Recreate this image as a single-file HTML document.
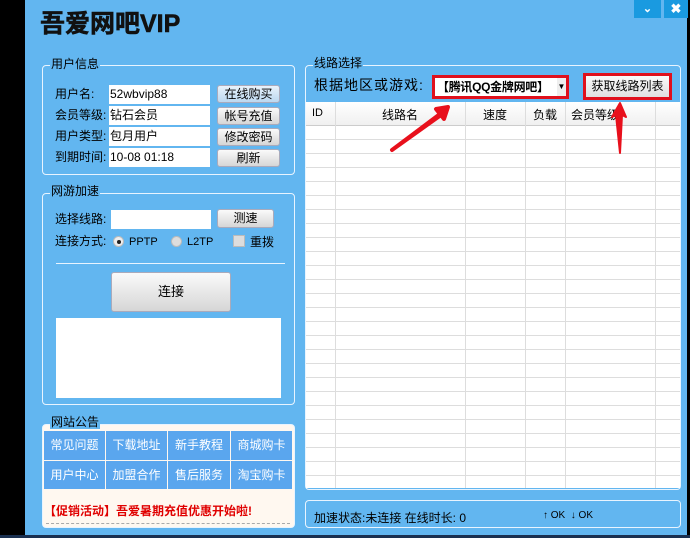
<!DOCTYPE html>
<html><head><meta charset="utf-8"><style>
*{margin:0;padding:0;box-sizing:border-box}
body{width:690px;height:538px;background:#62b6f0;position:relative;overflow:hidden;font-family:"Liberation Sans","Noto Sans CJK SC",sans-serif;font-size:12px;color:#000}
.a{position:absolute}
.grp{position:absolute;border:1px solid #e8f4ff;border-radius:4px}
.lbl{position:absolute;background:#62b6f0;font-size:12px;padding:0 1px;line-height:14px}
.inp{position:absolute;background:#fff;height:19px;line-height:19px;font-size:12px;padding-left:1px}
.btn{position:absolute;background:linear-gradient(#fafafa,#e6e6e6 55%,#d6d6d6);border:1px solid #aab;border-radius:3px;text-align:center;font-size:12px}
.cell{position:absolute;background:#5aa6ee;color:#fff;text-align:center;line-height:29px;font-size:12px}
</style></head><body>
<div class="a" style="left:0;top:0;width:25px;height:538px;background:#000"></div>
<div class="a" style="left:687px;top:0;width:3px;height:538px;background:#000"></div>
<div class="a" style="left:0;top:535px;width:690px;height:3px;background:#1a3050"></div>
<div class="a" style="left:634px;top:0;width:27px;height:18px;background:#1a9ae0;color:#fff;text-align:center;font-size:11px;font-weight:bold;line-height:18px">⌄</div>
<div class="a" style="left:664px;top:0;width:24px;height:18px;background:#1a9ae0;color:#fff;text-align:center;font-size:13px;font-weight:bold;line-height:18px">✖</div>
<div class="a" style="left:40px;top:9px;font-size:25px;font-weight:bold;color:#111;line-height:30px;-webkit-text-stroke:0.6px #111">吾爱网吧VIP</div>

<div class="grp" style="left:42px;top:65px;width:253px;height:110px"></div>
<div class="lbl" style="left:50px;top:57px">用户信息</div>
<div class="a" style="left:55px;top:84px;line-height:21px">用户名:<br>会员等级:<br>用户类型:<br>到期时间:</div>
<div class="inp" style="left:109px;top:85px;width:101px">52wbvip88</div>
<div class="inp" style="left:109px;top:106px;width:101px">钻石会员</div>
<div class="inp" style="left:109px;top:127px;width:101px">包月用户</div>
<div class="inp" style="left:109px;top:148px;width:101px">10-08 01:18</div>
<div class="btn" style="left:217px;top:85px;width:63px;height:18px;line-height:16px;background:linear-gradient(#e8f2fb,#bcd8f0)">在线购买</div>
<div class="btn" style="left:217px;top:107px;width:63px;height:18px;line-height:16px">帐号充值</div>
<div class="btn" style="left:217px;top:128px;width:63px;height:18px;line-height:16px">修改密码</div>
<div class="btn" style="left:217px;top:149px;width:63px;height:18px;line-height:16px">刷新</div>

<div class="grp" style="left:42px;top:193px;width:253px;height:212px"></div>
<div class="lbl" style="left:50px;top:184px">网游加速</div>
<div class="a" style="left:55px;top:210px">选择线路:</div>
<div class="inp" style="left:111px;top:210px;width:100px"></div>
<div class="btn" style="left:217px;top:209px;width:57px;height:19px;line-height:17px">测速</div>
<div class="a" style="left:55px;top:232px">连接方式:</div>
<div class="a" style="left:113px;top:236px;width:11px;height:11px;border-radius:50%;background:#eee;border:1px solid #bbb"></div>
<div class="a" style="left:117px;top:240px;width:4px;height:4px;border-radius:50%;background:#222"></div>
<div class="a" style="left:129px;top:236px;font-size:11px">PPTP</div>
<div class="a" style="left:171px;top:236px;width:11px;height:11px;border-radius:50%;background:#ddd;border:1px solid #bbb"></div>
<div class="a" style="left:187px;top:236px;font-size:11px">L2TP</div>
<div class="a" style="left:233px;top:235px;width:12px;height:12px;background:#ddd;border:1px solid #bbb"></div>
<div class="a" style="left:250px;top:233px">重拨</div>
<div class="a" style="left:56px;top:263px;width:229px;height:1px;background:#e8f4ff"></div>
<div class="btn" style="left:111px;top:272px;width:120px;height:40px;line-height:38px;font-size:13px">连接</div>
<div class="a" style="left:56px;top:318px;width:225px;height:80px;background:#fff"></div>

<div class="grp" style="left:42px;top:424px;width:253px;height:104px;background:#fff8f0"></div>
<div class="lbl" style="left:50px;top:415px">网站公告</div>
<div class="cell" style="left:44px;top:431px;width:61px;height:29px">常见问题</div>
<div class="cell" style="left:106px;top:431px;width:61px;height:29px">下载地址</div>
<div class="cell" style="left:168px;top:431px;width:62px;height:29px">新手教程</div>
<div class="cell" style="left:231px;top:431px;width:61px;height:29px">商城购卡</div>
<div class="cell" style="left:44px;top:461px;width:61px;height:28px">用户中心</div>
<div class="cell" style="left:106px;top:461px;width:61px;height:28px">加盟合作</div>
<div class="cell" style="left:168px;top:461px;width:62px;height:28px">售后服务</div>
<div class="cell" style="left:231px;top:461px;width:61px;height:28px">淘宝购卡</div>
<div class="a" style="left:44px;top:502px;color:#e00000;font-weight:bold;font-size:12px">【促销活动】吾爱暑期充值优惠开始啦!</div>
<div class="a" style="left:46px;top:523px;width:244px;border-top:1px dashed #aaa"></div>

<div class="grp" style="left:305px;top:65px;width:376px;height:425px"></div>
<div class="lbl" style="left:313px;top:56px">线路选择</div>
<div class="a" style="left:314px;top:75px;font-size:14px;letter-spacing:1px">根据地区或游戏:</div>
<div class="a" style="left:432px;top:75px;width:137px;height:24px;background:#fff;border:3px solid #e0101c"></div>
<div class="a" style="left:437px;top:78px;font-size:12px;font-weight:bold;letter-spacing:-0.3px">【腾讯QQ金牌网吧】</div>
<div class="a" style="left:557px;top:78px;width:9px;height:18px;background:#eee;font-size:8px;line-height:18px;text-align:center">▼</div>
<div class="a" style="left:583px;top:73px;width:89px;height:27px;border:3px solid #e0101c;background:linear-gradient(#fafafa,#e0e0e0);text-align:center;line-height:21px;font-size:12px">获取线路列表</div>

<div class="a" style="left:306px;top:102px;width:374px;height:386px;background:#fff;
background-image:repeating-linear-gradient(to bottom,transparent 0,transparent 13px,#ddd 13px,#ddd 14px);background-position:0 24px"></div>
<div class="a" style="left:306px;top:102px;width:374px;height:24px;background:linear-gradient(#fff,#f0f0f0);border-bottom:1px solid #ccc"></div>
<div class="a" style="left:335px;top:102px;width:1px;height:386px;background:#ddd"></div>
<div class="a" style="left:465px;top:102px;width:1px;height:386px;background:#ddd"></div>
<div class="a" style="left:525px;top:102px;width:1px;height:386px;background:#ddd"></div>
<div class="a" style="left:565px;top:102px;width:1px;height:386px;background:#ddd"></div>
<div class="a" style="left:655px;top:102px;width:1px;height:386px;background:#ddd"></div>
<div class="a" style="left:312px;top:107px;font-size:11px">ID</div>
<div class="a" style="left:382px;top:106px">线路名</div>
<div class="a" style="left:483px;top:106px">速度</div>
<div class="a" style="left:533px;top:106px">负载</div>
<div class="a" style="left:571px;top:106px">会员等级</div>

<svg class="a" style="left:380px;top:95px" width="260" height="70">
<path d="M12 55 L60 19 L56 14 L68 12 L64 24 L61 20 Z" fill="#e8101c" stroke="#e8101c" stroke-width="4" stroke-linejoin="round"/>
<path d="M240 58 L236 20 L232 22 L240 8 L246 22 L242 20 Z" fill="#e8101c" stroke="#e8101c" stroke-width="2" stroke-linejoin="round"/>
</svg>

<div class="grp" style="left:305px;top:500px;width:376px;height:28px"></div>
<div class="a" style="left:314px;top:509px;font-size:12px">加速状态:未连接 在线时长: 0</div>
<div class="a" style="left:543px;top:510px;font-size:10px">↑ OK &nbsp;↓ OK</div>
</body></html>
